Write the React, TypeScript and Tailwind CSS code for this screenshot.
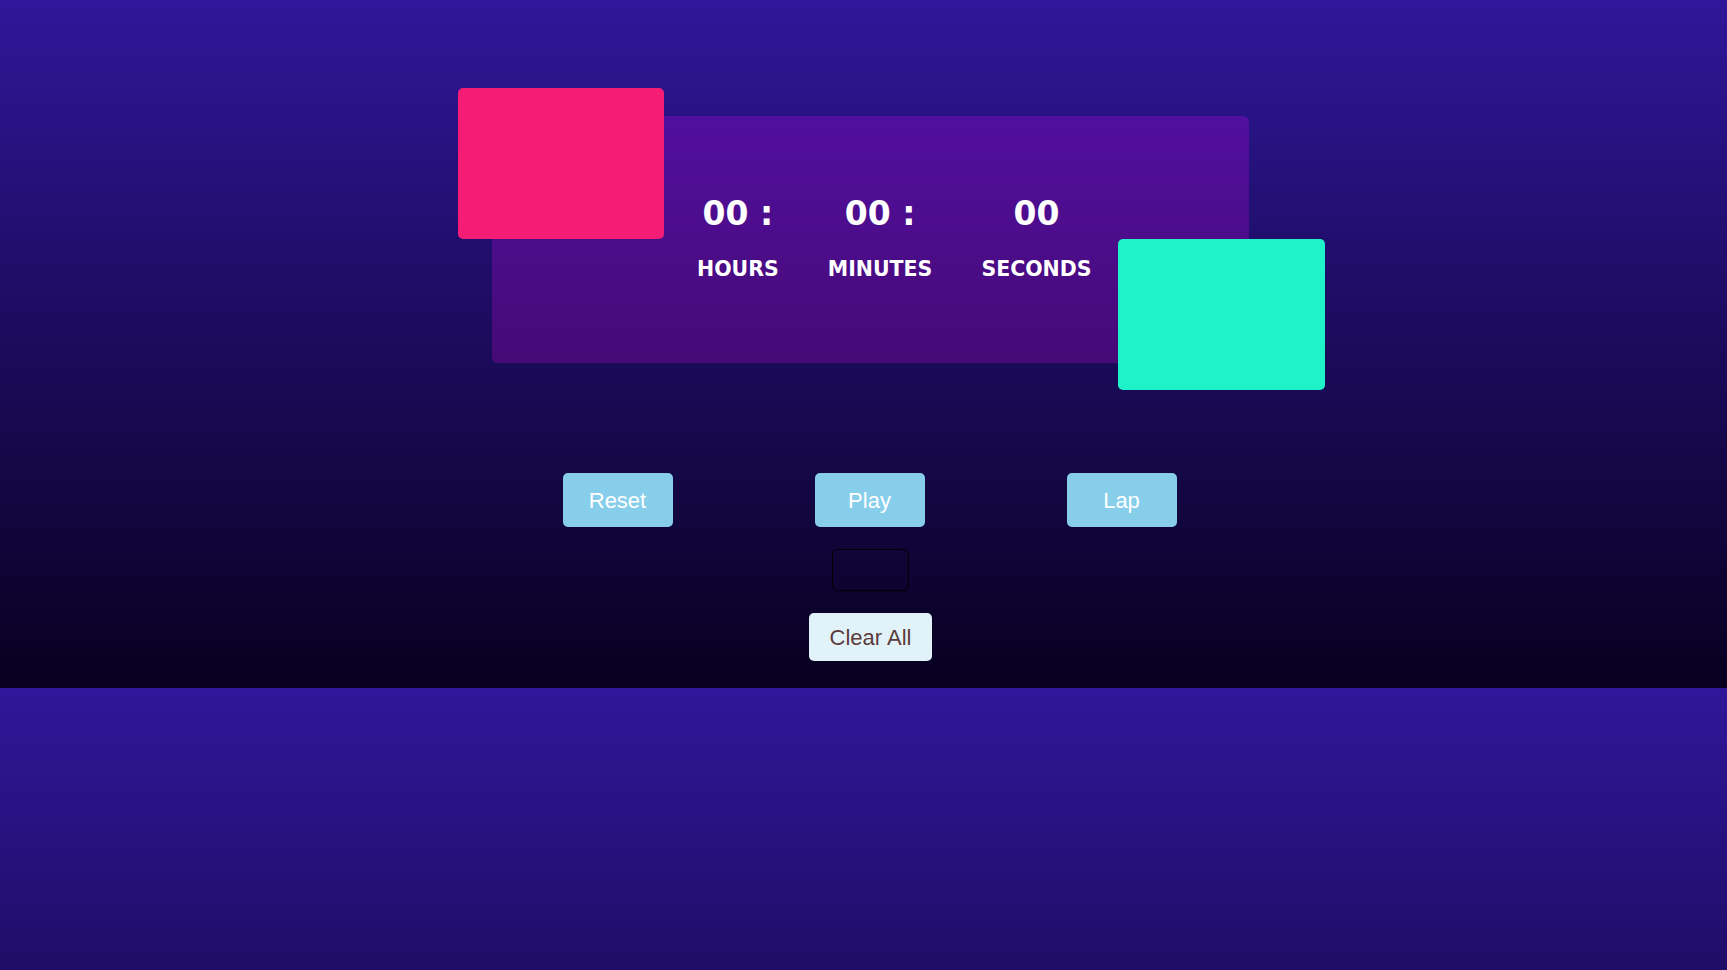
export default function App() {
  const units = [
    { value: '00 :', label: 'HOURS' },
    { value: '00 :', label: 'MINUTES' },
    { value: '00', label: 'SECONDS' },
  ];

  return (
    <div className="min-h-screen w-full bg-[linear-gradient(180deg,#2e1799_0%,#07001f_100%)] bg-[length:100%_688px] bg-repeat-y">
      <div className="h-[688px] flex flex-col items-center pl-[14px] pt-[116px]">
        {/* stopwatch card */}
        <div className="relative w-[757px] h-[247px] rounded-md bg-[linear-gradient(180deg,#520f9f_0%,#460a76_100%)]">
          <div className="absolute -left-[34px] -top-[28px] w-[206px] h-[151px] rounded-[5px] bg-[#f41c74]" />

          <div className="relative flex gap-[49px] pl-[205px] pt-[79px] font-['DejaVu_Sans',sans-serif] font-bold text-white">
            {units.map((u) => (
              <div key={u.label} className="flex flex-col items-center">
                <span className="h-[38px] text-[33px] leading-[38px] whitespace-pre">{u.value}</span>
                <span className="mt-[24px] h-[24px] text-[20.5px] leading-[24px]">{u.label}</span>
              </div>
            ))}
          </div>

          <div className="absolute -right-[76px] -bottom-[27px] w-[207px] h-[151px] rounded-[5px] bg-[#1df2c9]" />
        </div>

        {/* controls */}
        <div className="mt-[110px] mr-[2px] flex gap-[142px] font-['Liberation_Sans',Arial,sans-serif]">
          <button className="w-[110px] h-[54px] rounded-[5px] bg-[#87ceeb] text-white text-[22px]">Reset</button>
          <button className="w-[110px] h-[54px] rounded-[5px] bg-[#87ceeb] text-white text-[22px]">Play</button>
          <button className="w-[110px] h-[54px] rounded-[5px] bg-[#87ceeb] text-white text-[22px]">Lap</button>
        </div>

        <ul className="mt-[22px] w-[77px] h-[42px] rounded-md border border-black" />

        <button className="mt-[22px] w-[123px] h-[48px] rounded-[5px] bg-[#e1f3f8] text-[#5c3b3b] text-[22px] font-['Liberation_Sans',Arial,sans-serif]">
          Clear All
        </button>
      </div>
    </div>
  );
}
